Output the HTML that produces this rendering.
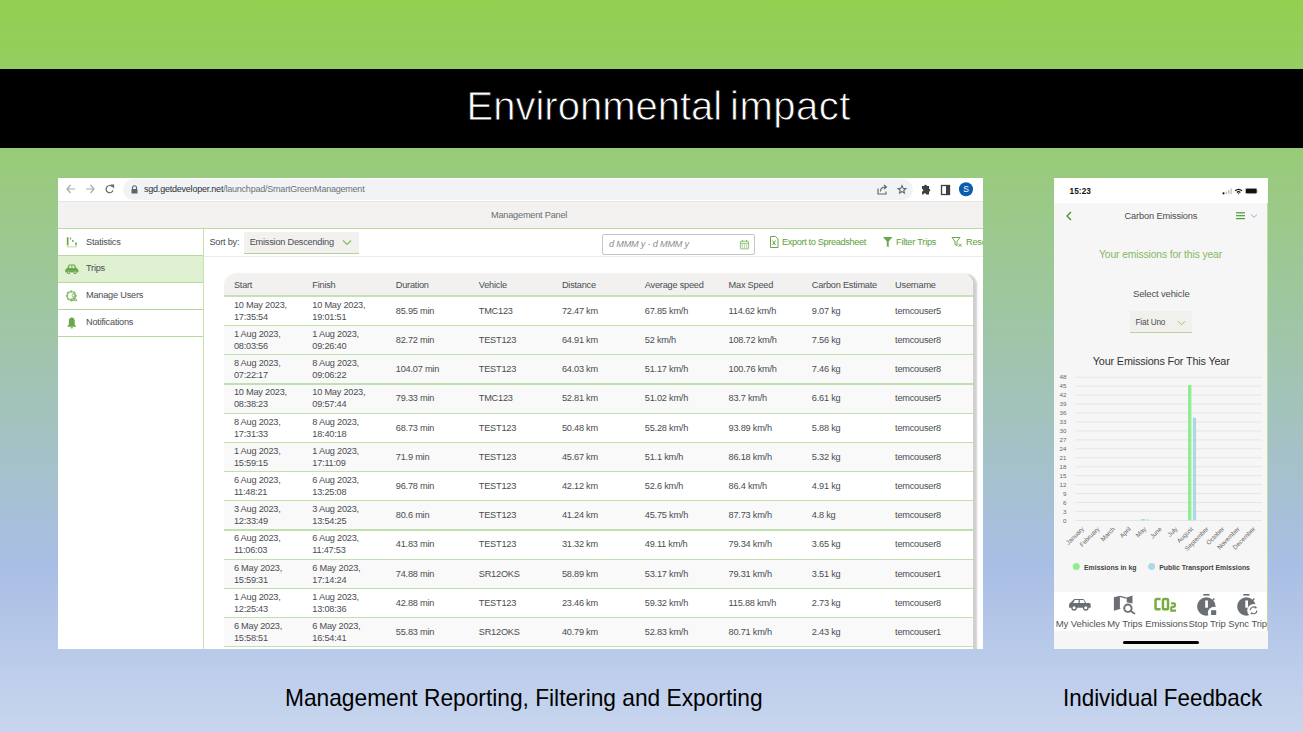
<!DOCTYPE html>
<html><head><meta charset="utf-8">
<style>
*{margin:0;padding:0;box-sizing:border-box}
html,body{width:1303px;height:732px;overflow:hidden}
body{position:relative;font-family:"Liberation Sans",sans-serif;
background:linear-gradient(180deg,#92d050 0px,#a9bee5 565px,#c8d6ee 732px);}
.abs{position:absolute;white-space:nowrap}
#band{left:0;top:69px;width:1303px;height:79px;background:#000}
#title{left:0;top:67px;width:1303px;height:79px;color:#fff;font-size:40px;text-align:center;line-height:79px;-webkit-text-stroke:0.8px #000}
.cap{color:#000;font-size:24px;white-space:nowrap;transform-origin:0 0}
#br{left:58px;top:178px;width:925px;height:471px;background:#fff;overflow:hidden}
#ph{left:1054px;top:178px;width:214px;height:471px;background:#f6f6f6;overflow:hidden}
.url{font-size:9px;color:#303134;letter-spacing:-0.22px}
.t9{font-size:9.2px;letter-spacing:-0.22px;line-height:11px}
.dk{color:#4a4d51}
.gry{color:#6a6d70}
.grn{color:#5d9e3a}
.ital{font-style:italic}
.ph{line-height:11px;letter-spacing:-0.15px}
</style></head><body>
<div id="band" class="abs"></div>
<div id="title" class="abs"><span class="abs" style="left:466.5px;top:0">Environmental</span><span class="abs" style="left:730px;top:0;letter-spacing:0.5px">impact</span></div>
<div id="br" class="abs">
<div class="abs" style="left:0;top:0;width:925px;height:24px;background:#fff;border-bottom:1px solid #e6e6e6"></div>
<svg class="abs" style="left:7px;top:5px" width="60" height="14" viewBox="0 0 60 14">
<g fill="none" stroke="#a8abae" stroke-width="1.2"><path d="M2 6H10M5.5 2L2 6l3.5 4"/><path d="M21 6H29M25.5 2L29 6l-3.5 4"/></g>
<path d="M47.4 3.7A3.6 3.6 0 1 0 48.1 7.4" fill="none" stroke="#5f6368" stroke-width="1.2"/><path d="M45.2 1.6h3.9v3.9z" fill="#5f6368"/>
</svg>
<div class="abs" style="left:65px;top:1px;width:790px;height:21px;border-radius:11px;background:#f1f3f4"></div>
<svg class="abs" style="left:73px;top:7px" width="7" height="9" viewBox="0 0 7 9"><path d="M1.5 4V2.8a2 2 0 0 1 4 0V4" fill="none" stroke="#5f6368" stroke-width="1.1"/><rect x="0.5" y="4" width="6" height="4.6" rx="0.6" fill="#5f6368"/></svg>
<div class="abs url" style="left:86px;top:6.2px">sgd.getdeveloper.net<span style="color:#6f7276">/launchpad/SmartGreenManagement</span></div>
<svg class="abs" style="left:817px;top:4px" width="100" height="16" viewBox="0 0 100 16">
<g fill="none" stroke="#5f6368" stroke-width="1.1"><path d="M3 6.5v5.5h8V9.5"/><path d="M5.5 9.5c0-3 2-4.5 5-4.5M9 3l2.5 2L9 7"/></g>
<path d="M27 3.6l1.15 2.6 2.8.25-2.15 1.8.65 2.8L27 9.6l-2.45 1.45.65-2.8-2.15-1.8 2.8-.25z" fill="none" stroke="#5f6368" stroke-width="1.1"/>
<path d="M47 4h2.2a1.3 1.3 0 0 1 2.6 0H54v3a1.3 1.3 0 0 1 0 2.6V12.5H51a1.3 1.3 0 0 0-2.6 0H47V9.6a1.3 1.3 0 0 0 0-2.6z" fill="#3c4043"/>
<rect x="66.5" y="3.5" width="8" height="9" fill="none" stroke="#3c4043" stroke-width="1.3"/><rect x="71" y="3.5" width="3.5" height="9" fill="#3c4043"/>
<circle cx="91" cy="7.3" r="7" fill="#0b5cad"/><text x="91" y="10.3" font-size="8.5" fill="#fff" text-anchor="middle" font-family="Liberation Sans">S</text>
</svg>
<div class="abs" style="left:0;top:24px;width:925px;height:27px;background:#f3f2f1;border-bottom:1.5px solid #b9dca5"></div>
<div class="abs t9 gry" style="left:433px;top:32px">Management Panel</div>
<div class="abs" style="left:144.5px;top:51px;width:1.5px;height:420px;background:#c5e3b1"></div>
<div class="abs" style="left:0;top:77.5px;width:144.5px;height:27px;background:#e0f1d1"></div>
<div class="abs" style="left:0;top:77px;width:144.5px;height:1.1px;background:#b5d99c"></div>
<div class="abs" style="left:0;top:104px;width:144.5px;height:1.1px;background:#b5d99c"></div>
<div class="abs" style="left:0;top:130.9px;width:144.5px;height:1.1px;background:#b5d99c"></div>
<div class="abs" style="left:0;top:157.5px;width:144.5px;height:1.1px;background:#b5d99c"></div>
<div class="abs t9 dk" style="left:28px;top:58.9px">Statistics</div>
<div class="abs t9 dk" style="left:28px;top:85.4px">Trips</div>
<div class="abs t9 dk" style="left:28px;top:112.4px">Manage Users</div>
<div class="abs t9 dk" style="left:28px;top:139.3px">Notifications</div>
<svg class="abs" style="left:0;top:51px" width="30" height="110" viewBox="0 51 30 110">
<g fill="#6aa84f">
<rect x="8.8" y="59.2" width="1.7" height="8.3"/><rect x="12" y="59.5" width="1.1" height="2"/><rect x="14.2" y="62" width="1.4" height="2"/><rect x="17.2" y="64.4" width="1.5" height="3"/><rect x="8.8" y="68.5" width="10.2" height="0.8" opacity="0.55"/>
</g><g fill="#6aa84f" transform="translate(7.2,86.5) scale(0.86) translate(-7.2,-86)"><path d="M7.2 93Q7.2 90.9 9.4 90.5L10.9 87.1Q11.3 86 12.4 86H17.4Q18.5 86 18.9 87.1L20.4 90.5Q22.6 90.9 22.6 93V95H20.9A2.3 2.3 0 0 0 16.4 95H13.4A2.3 2.3 0 0 0 8.9 95H7.2Z"/><circle cx="11.15" cy="95.1" r="2.1"/><circle cx="18.65" cy="95.1" r="2.1"/>
</g>
<g transform="translate(7.2,86.5) scale(0.86) translate(-7.2,-86)"><g fill="#e0f1d1"><path d="M11.4 90.2L12.5 87.3H14.5V90.2Z M15.5 87.3H17.4L18.5 90.2H15.5Z"/><circle cx="11.15" cy="95.1" r="0.9"/><circle cx="18.65" cy="95.1" r="0.9"/></g></g>
<g fill="none" stroke="#7cb65a" stroke-width="0.9">
<circle cx="13.3" cy="117.8" r="4.1"/>
<circle cx="17.60" cy="117.80" r="0.9"/><circle cx="16.34" cy="120.84" r="0.9"/><circle cx="13.30" cy="122.10" r="0.9"/><circle cx="10.26" cy="120.84" r="0.9"/><circle cx="9.00" cy="117.80" r="0.9"/><circle cx="10.26" cy="114.76" r="0.9"/><circle cx="13.30" cy="113.50" r="0.9"/><circle cx="16.34" cy="114.76" r="0.9"/>
<circle cx="15.7" cy="117.3" r="1.6"/><path d="M12.6 122.6Q13.2 119.8 15.7 119.8Q18.4 119.8 18.9 122.6Z"/>
</g>
<path fill="#6aa84f" d="M13.75 139.6Q10.8 139.8 10.8 143.3V146.4L9.5 148.2V148.8H18V148.2L16.7 146.4V143.3Q16.7 139.8 13.75 139.6ZM12.5 149.3A1.25 1.25 0 0 0 15 149.3Z"/>
</svg>
<div class="abs" style="left:146px;top:78px;width:779px;height:1px;background:#ebebeb"></div>
<div class="abs t9 dk" style="left:151.4px;top:59px">Sort by:</div>
<div class="abs" style="left:185.5px;top:54px;width:115.5px;height:21.5px;background:#f2f1f0;border-bottom:1.3px solid #b0d692"></div>
<div class="abs t9 dk" style="left:191.7px;top:58.5px">Emission Descending</div>
<svg class="abs" style="left:284px;top:61px" width="10" height="7" viewBox="0 0 10 7"><path d="M1 1.5l4 4 4-4" fill="none" stroke="#7cbf55" stroke-width="1.1"/></svg>
<div class="abs" style="left:544.3px;top:56.2px;width:153px;height:21.3px;background:#fff;border:1px solid #c6c6c6;border-radius:2px"></div>
<div class="abs t9 ital" style="left:551px;top:61px;color:#8a8d90">d MMM y - d MMM y</div>
<svg class="abs" style="left:681px;top:61px" width="11" height="11" viewBox="0 0 11 11"><g fill="none" stroke="#7ab35a" stroke-width="0.8"><rect x="1.4" y="2.2" width="8.2" height="7.6" rx="0.5"/><path d="M1.4 4.3h8.2"/><path d="M3.5 1v2M7.5 1v2"/></g><g fill="#7ab35a"><rect x="2.7" y="5.6" width="1.2" height="0.9"/><rect x="4.9" y="5.6" width="1.2" height="0.9"/><rect x="7.1" y="5.6" width="1.2" height="0.9"/><rect x="2.7" y="7.6" width="1.2" height="0.9"/><rect x="4.9" y="7.6" width="1.2" height="0.9"/><rect x="7.1" y="7.6" width="1.2" height="0.9"/></g></svg>
<svg class="abs" style="left:710px;top:57px" width="200" height="14" viewBox="0 0 200 14">
<g fill="none" stroke="#6aa84f" stroke-width="1"><path d="M2.5 1.5h5l2.5 2.5v8.5h-7.5z"/><path d="M4.5 5.5l3 4.5M7.5 5.5l-3 4.5"/></g>
<path d="M115 2h9.5l-3.8 4.6v5.6l-1.9-1V6.6z" fill="#6aa84f"/>
<g fill="none" stroke="#6aa84f" stroke-width="1"><path d="M184 2.5h8l-3 3.8v4.5l-2-1.3V6.3z"/><path d="M190.5 8.8l3 3M193.5 8.8l-3 3"/></g>
</svg>
<div class="abs t9 grn" style="left:724px;top:58.5px;letter-spacing:-0.36px">Export to Spreadsheet</div>
<div class="abs t9 grn" style="left:838px;top:58.5px">Filter Trips</div>
<div class="abs t9 grn" style="left:908px;top:58.5px">Reset</div>
<div class="abs" style="left:165.5px;top:96.30000000000001px;width:749.6px;height:400px;border-radius:10px 10px 0 0;box-shadow:3px 1px 2px 1px rgba(0,0,0,0.19)"></div>
<div class="abs" style="left:165.5px;top:96.30000000000001px;width:749.6px;height:400px;background:#fff;border-radius:10px 10px 0 0;overflow:hidden">
<div class="abs" style="left:0;top:0;width:750px;height:22.69999999999999px;background:#f2f1f0;border-bottom:1.8px solid #c8e2b6"></div>
<div class="abs t9 dk" style="left:10.400000000000006px;top:5.5px">Start</div>
<div class="abs t9 dk" style="left:88.80000000000001px;top:5.5px">Finish</div>
<div class="abs t9 dk" style="left:172.3px;top:5.5px">Duration</div>
<div class="abs t9 dk" style="left:255.3px;top:5.5px">Vehicle</div>
<div class="abs t9 dk" style="left:338.4px;top:5.5px">Distance</div>
<div class="abs t9 dk" style="left:421.29999999999995px;top:5.5px">Average speed</div>
<div class="abs t9 dk" style="left:505.1px;top:5.5px">Max Speed</div>
<div class="abs t9 dk" style="left:588.3px;top:5.5px">Carbon Estimate</div>
<div class="abs t9 dk" style="left:671.6px;top:5.5px">Username</div>
<div class="abs" style="left:0;top:21.70px;width:750px;height:29.7px;background:#fff"></div>
<div class="abs t9 dk" style="left:10.400000000000006px;top:24.60px;line-height:12px">10 May 2023,<br>17:35:54</div>
<div class="abs t9 dk" style="left:88.80000000000001px;top:24.60px;line-height:12px">10 May 2023,<br>19:01:51</div>
<div class="abs t9 dk" style="left:172.3px;top:30.60px;line-height:12px">85.95 min</div>
<div class="abs t9 dk" style="left:255.3px;top:30.60px;line-height:12px">TMC123</div>
<div class="abs t9 dk" style="left:338.4px;top:30.60px;line-height:12px">72.47 km</div>
<div class="abs t9 dk" style="left:421.29999999999995px;top:30.60px;line-height:12px">67.85 km/h</div>
<div class="abs t9 dk" style="left:505.1px;top:30.60px;line-height:12px">114.62 km/h</div>
<div class="abs t9 dk" style="left:588.3px;top:30.60px;line-height:12px">9.07 kg</div>
<div class="abs t9 dk" style="left:671.6px;top:30.60px;line-height:12px">temcouser5</div>
<div class="abs" style="left:0;top:50.90px;width:750px;height:29.7px;background:#f9f9f9"></div>
<div class="abs t9 dk" style="left:10.400000000000006px;top:53.80px;line-height:12px">1 Aug 2023,<br>08:03:56</div>
<div class="abs t9 dk" style="left:88.80000000000001px;top:53.80px;line-height:12px">1 Aug 2023,<br>09:26:40</div>
<div class="abs t9 dk" style="left:172.3px;top:59.80px;line-height:12px">82.72 min</div>
<div class="abs t9 dk" style="left:255.3px;top:59.80px;line-height:12px">TEST123</div>
<div class="abs t9 dk" style="left:338.4px;top:59.80px;line-height:12px">64.91 km</div>
<div class="abs t9 dk" style="left:421.29999999999995px;top:59.80px;line-height:12px">52 km/h</div>
<div class="abs t9 dk" style="left:505.1px;top:59.80px;line-height:12px">108.72 km/h</div>
<div class="abs t9 dk" style="left:588.3px;top:59.80px;line-height:12px">7.56 kg</div>
<div class="abs t9 dk" style="left:671.6px;top:59.80px;line-height:12px">temcouser8</div>
<div class="abs" style="left:0;top:80.10px;width:750px;height:29.7px;background:#f9f9f9"></div>
<div class="abs t9 dk" style="left:10.400000000000006px;top:83.00px;line-height:12px">8 Aug 2023,<br>07:22:17</div>
<div class="abs t9 dk" style="left:88.80000000000001px;top:83.00px;line-height:12px">8 Aug 2023,<br>09:06:22</div>
<div class="abs t9 dk" style="left:172.3px;top:89.00px;line-height:12px">104.07 min</div>
<div class="abs t9 dk" style="left:255.3px;top:89.00px;line-height:12px">TEST123</div>
<div class="abs t9 dk" style="left:338.4px;top:89.00px;line-height:12px">64.03 km</div>
<div class="abs t9 dk" style="left:421.29999999999995px;top:89.00px;line-height:12px">51.17 km/h</div>
<div class="abs t9 dk" style="left:505.1px;top:89.00px;line-height:12px">100.76 km/h</div>
<div class="abs t9 dk" style="left:588.3px;top:89.00px;line-height:12px">7.46 kg</div>
<div class="abs t9 dk" style="left:671.6px;top:89.00px;line-height:12px">temcouser8</div>
<div class="abs" style="left:0;top:109.30px;width:750px;height:29.7px;background:#f9f9f9"></div>
<div class="abs t9 dk" style="left:10.400000000000006px;top:112.20px;line-height:12px">10 May 2023,<br>08:38:23</div>
<div class="abs t9 dk" style="left:88.80000000000001px;top:112.20px;line-height:12px">10 May 2023,<br>09:57:44</div>
<div class="abs t9 dk" style="left:172.3px;top:118.20px;line-height:12px">79.33 min</div>
<div class="abs t9 dk" style="left:255.3px;top:118.20px;line-height:12px">TMC123</div>
<div class="abs t9 dk" style="left:338.4px;top:118.20px;line-height:12px">52.81 km</div>
<div class="abs t9 dk" style="left:421.29999999999995px;top:118.20px;line-height:12px">51.02 km/h</div>
<div class="abs t9 dk" style="left:505.1px;top:118.20px;line-height:12px">83.7 km/h</div>
<div class="abs t9 dk" style="left:588.3px;top:118.20px;line-height:12px">6.61 kg</div>
<div class="abs t9 dk" style="left:671.6px;top:118.20px;line-height:12px">temcouser5</div>
<div class="abs" style="left:0;top:138.50px;width:750px;height:29.7px;background:#fff"></div>
<div class="abs t9 dk" style="left:10.400000000000006px;top:141.40px;line-height:12px">8 Aug 2023,<br>17:31:33</div>
<div class="abs t9 dk" style="left:88.80000000000001px;top:141.40px;line-height:12px">8 Aug 2023,<br>18:40:18</div>
<div class="abs t9 dk" style="left:172.3px;top:147.40px;line-height:12px">68.73 min</div>
<div class="abs t9 dk" style="left:255.3px;top:147.40px;line-height:12px">TEST123</div>
<div class="abs t9 dk" style="left:338.4px;top:147.40px;line-height:12px">50.48 km</div>
<div class="abs t9 dk" style="left:421.29999999999995px;top:147.40px;line-height:12px">55.28 km/h</div>
<div class="abs t9 dk" style="left:505.1px;top:147.40px;line-height:12px">93.89 km/h</div>
<div class="abs t9 dk" style="left:588.3px;top:147.40px;line-height:12px">5.88 kg</div>
<div class="abs t9 dk" style="left:671.6px;top:147.40px;line-height:12px">temcouser8</div>
<div class="abs" style="left:0;top:167.70px;width:750px;height:29.7px;background:#f9f9f9"></div>
<div class="abs t9 dk" style="left:10.400000000000006px;top:170.60px;line-height:12px">1 Aug 2023,<br>15:59:15</div>
<div class="abs t9 dk" style="left:88.80000000000001px;top:170.60px;line-height:12px">1 Aug 2023,<br>17:11:09</div>
<div class="abs t9 dk" style="left:172.3px;top:176.60px;line-height:12px">71.9 min</div>
<div class="abs t9 dk" style="left:255.3px;top:176.60px;line-height:12px">TEST123</div>
<div class="abs t9 dk" style="left:338.4px;top:176.60px;line-height:12px">45.67 km</div>
<div class="abs t9 dk" style="left:421.29999999999995px;top:176.60px;line-height:12px">51.1 km/h</div>
<div class="abs t9 dk" style="left:505.1px;top:176.60px;line-height:12px">86.18 km/h</div>
<div class="abs t9 dk" style="left:588.3px;top:176.60px;line-height:12px">5.32 kg</div>
<div class="abs t9 dk" style="left:671.6px;top:176.60px;line-height:12px">temcouser8</div>
<div class="abs" style="left:0;top:196.90px;width:750px;height:29.7px;background:#fff"></div>
<div class="abs t9 dk" style="left:10.400000000000006px;top:199.80px;line-height:12px">6 Aug 2023,<br>11:48:21</div>
<div class="abs t9 dk" style="left:88.80000000000001px;top:199.80px;line-height:12px">6 Aug 2023,<br>13:25:08</div>
<div class="abs t9 dk" style="left:172.3px;top:205.80px;line-height:12px">96.78 min</div>
<div class="abs t9 dk" style="left:255.3px;top:205.80px;line-height:12px">TEST123</div>
<div class="abs t9 dk" style="left:338.4px;top:205.80px;line-height:12px">42.12 km</div>
<div class="abs t9 dk" style="left:421.29999999999995px;top:205.80px;line-height:12px">52.6 km/h</div>
<div class="abs t9 dk" style="left:505.1px;top:205.80px;line-height:12px">86.4 km/h</div>
<div class="abs t9 dk" style="left:588.3px;top:205.80px;line-height:12px">4.91 kg</div>
<div class="abs t9 dk" style="left:671.6px;top:205.80px;line-height:12px">temcouser8</div>
<div class="abs" style="left:0;top:226.10px;width:750px;height:29.7px;background:#f9f9f9"></div>
<div class="abs t9 dk" style="left:10.400000000000006px;top:229.00px;line-height:12px">3 Aug 2023,<br>12:33:49</div>
<div class="abs t9 dk" style="left:88.80000000000001px;top:229.00px;line-height:12px">3 Aug 2023,<br>13:54:25</div>
<div class="abs t9 dk" style="left:172.3px;top:235.00px;line-height:12px">80.6 min</div>
<div class="abs t9 dk" style="left:255.3px;top:235.00px;line-height:12px">TEST123</div>
<div class="abs t9 dk" style="left:338.4px;top:235.00px;line-height:12px">41.24 km</div>
<div class="abs t9 dk" style="left:421.29999999999995px;top:235.00px;line-height:12px">45.75 km/h</div>
<div class="abs t9 dk" style="left:505.1px;top:235.00px;line-height:12px">87.73 km/h</div>
<div class="abs t9 dk" style="left:588.3px;top:235.00px;line-height:12px">4.8 kg</div>
<div class="abs t9 dk" style="left:671.6px;top:235.00px;line-height:12px">temcouser8</div>
<div class="abs" style="left:0;top:255.30px;width:750px;height:29.7px;background:#fff"></div>
<div class="abs t9 dk" style="left:10.400000000000006px;top:258.20px;line-height:12px">6 Aug 2023,<br>11:06:03</div>
<div class="abs t9 dk" style="left:88.80000000000001px;top:258.20px;line-height:12px">6 Aug 2023,<br>11:47:53</div>
<div class="abs t9 dk" style="left:172.3px;top:264.20px;line-height:12px">41.83 min</div>
<div class="abs t9 dk" style="left:255.3px;top:264.20px;line-height:12px">TEST123</div>
<div class="abs t9 dk" style="left:338.4px;top:264.20px;line-height:12px">31.32 km</div>
<div class="abs t9 dk" style="left:421.29999999999995px;top:264.20px;line-height:12px">49.11 km/h</div>
<div class="abs t9 dk" style="left:505.1px;top:264.20px;line-height:12px">79.34 km/h</div>
<div class="abs t9 dk" style="left:588.3px;top:264.20px;line-height:12px">3.65 kg</div>
<div class="abs t9 dk" style="left:671.6px;top:264.20px;line-height:12px">temcouser8</div>
<div class="abs" style="left:0;top:284.50px;width:750px;height:29.7px;background:#f9f9f9"></div>
<div class="abs t9 dk" style="left:10.400000000000006px;top:287.40px;line-height:12px">6 May 2023,<br>15:59:31</div>
<div class="abs t9 dk" style="left:88.80000000000001px;top:287.40px;line-height:12px">6 May 2023,<br>17:14:24</div>
<div class="abs t9 dk" style="left:172.3px;top:293.40px;line-height:12px">74.88 min</div>
<div class="abs t9 dk" style="left:255.3px;top:293.40px;line-height:12px">SR12OKS</div>
<div class="abs t9 dk" style="left:338.4px;top:293.40px;line-height:12px">58.89 km</div>
<div class="abs t9 dk" style="left:421.29999999999995px;top:293.40px;line-height:12px">53.17 km/h</div>
<div class="abs t9 dk" style="left:505.1px;top:293.40px;line-height:12px">79.31 km/h</div>
<div class="abs t9 dk" style="left:588.3px;top:293.40px;line-height:12px">3.51 kg</div>
<div class="abs t9 dk" style="left:671.6px;top:293.40px;line-height:12px">temcouser1</div>
<div class="abs" style="left:0;top:313.70px;width:750px;height:29.7px;background:#fff"></div>
<div class="abs t9 dk" style="left:10.400000000000006px;top:316.60px;line-height:12px">1 Aug 2023,<br>12:25:43</div>
<div class="abs t9 dk" style="left:88.80000000000001px;top:316.60px;line-height:12px">1 Aug 2023,<br>13:08:36</div>
<div class="abs t9 dk" style="left:172.3px;top:322.60px;line-height:12px">42.88 min</div>
<div class="abs t9 dk" style="left:255.3px;top:322.60px;line-height:12px">TEST123</div>
<div class="abs t9 dk" style="left:338.4px;top:322.60px;line-height:12px">23.46 km</div>
<div class="abs t9 dk" style="left:421.29999999999995px;top:322.60px;line-height:12px">59.32 km/h</div>
<div class="abs t9 dk" style="left:505.1px;top:322.60px;line-height:12px">115.88 km/h</div>
<div class="abs t9 dk" style="left:588.3px;top:322.60px;line-height:12px">2.73 kg</div>
<div class="abs t9 dk" style="left:671.6px;top:322.60px;line-height:12px">temcouser8</div>
<div class="abs" style="left:0;top:342.90px;width:750px;height:29.7px;background:#f9f9f9"></div>
<div class="abs t9 dk" style="left:10.400000000000006px;top:345.80px;line-height:12px">6 May 2023,<br>15:58:51</div>
<div class="abs t9 dk" style="left:88.80000000000001px;top:345.80px;line-height:12px">6 May 2023,<br>16:54:41</div>
<div class="abs t9 dk" style="left:172.3px;top:351.80px;line-height:12px">55.83 min</div>
<div class="abs t9 dk" style="left:255.3px;top:351.80px;line-height:12px">SR12OKS</div>
<div class="abs t9 dk" style="left:338.4px;top:351.80px;line-height:12px">40.79 km</div>
<div class="abs t9 dk" style="left:421.29999999999995px;top:351.80px;line-height:12px">52.83 km/h</div>
<div class="abs t9 dk" style="left:505.1px;top:351.80px;line-height:12px">80.71 km/h</div>
<div class="abs t9 dk" style="left:588.3px;top:351.80px;line-height:12px">2.43 kg</div>
<div class="abs t9 dk" style="left:671.6px;top:351.80px;line-height:12px">temcouser1</div>
<div class="abs" style="left:0;top:20.90px;width:750px;height:1.9px;background:#c8e2b6"></div>
<div class="abs" style="left:0;top:50.70px;width:750px;height:1.2px;background:#c2e0ad"></div>
<div class="abs" style="left:0;top:79.90px;width:750px;height:1.2px;background:#c2e0ad"></div>
<div class="abs" style="left:0;top:109.10px;width:750px;height:1.2px;background:#c2e0ad"></div>
<div class="abs" style="left:0;top:138.30px;width:750px;height:1.2px;background:#c2e0ad"></div>
<div class="abs" style="left:0;top:167.50px;width:750px;height:1.2px;background:#c2e0ad"></div>
<div class="abs" style="left:0;top:196.70px;width:750px;height:1.2px;background:#c2e0ad"></div>
<div class="abs" style="left:0;top:225.90px;width:750px;height:1.2px;background:#c2e0ad"></div>
<div class="abs" style="left:0;top:255.10px;width:750px;height:1.2px;background:#c2e0ad"></div>
<div class="abs" style="left:0;top:284.30px;width:750px;height:1.2px;background:#c2e0ad"></div>
<div class="abs" style="left:0;top:313.50px;width:750px;height:1.2px;background:#c2e0ad"></div>
<div class="abs" style="left:0;top:342.70px;width:750px;height:1.2px;background:#c2e0ad"></div>
<div class="abs" style="left:0;top:371.90px;width:750px;height:1.2px;background:#c2e0ad"></div>
</div>
</div>
<div id="ph" class="abs">
<div class="abs" style="left:0;top:0;width:214px;height:25px;background:#fff"></div>
<div class="abs" style="left:15.5px;top:9px;font-size:8.2px;font-weight:bold;color:#111;letter-spacing:0.1px">15:23</div>
<svg class="abs" style="left:168px;top:9.8px" width="40" height="8" viewBox="0 0 40 8">
<circle cx="1.5" cy="5.3" r="1.1" fill="#111"/><rect x="3.6" y="3.6" width="1.5" height="2.6" fill="#c8c8c8"/><rect x="6" y="2" width="1.5" height="4.2" fill="#c8c8c8"/><rect x="8.4" y="0.4" width="1.5" height="5.8" fill="#c8c8c8"/>
<path d="M12.8 2.2a6 6 0 0 1 7.6 0l-.9 1a4.6 4.6 0 0 0-5.8 0z M14.4 3.9a3.4 3.4 0 0 1 4.4 0l-.9 1a2 2 0 0 0-2.6 0z M15.8 5.5a1.3 1.3 0 0 1 1.6 0l-.8.9z" fill="#111"/>
<rect x="23.4" y="0.3" width="11.6" height="5.4" rx="1.4" fill="#111" stroke="#d8d8d8" stroke-width="0.7"/><rect x="35" y="2.3" width="0.9" height="1.8" fill="#c8c8c8"/>
</svg>
<div class="abs" style="left:213px;top:25px;width:1px;height:428px;background:#c0dc9f"></div>
<svg class="abs" style="left:11px;top:33px" width="8" height="10" viewBox="0 0 8 10"><path d="M6 1L2 5l4 4" fill="none" stroke="#3f8f2c" stroke-width="1.3"/></svg>
<div class="abs ph dk" style="left:70.6px;top:32.8px;font-size:9.25px">Carbon Emissions</div>
<svg class="abs" style="left:181px;top:33px" width="24" height="9" viewBox="0 0 24 9"><g fill="#4c9a37"><rect x="1" y="1.2" width="9" height="1.2"/><rect x="1" y="4.1" width="9" height="1.2"/><rect x="1" y="7" width="9" height="1.2"/></g><path d="M16 3.5l3 2.8 3-2.8" fill="none" stroke="#7d9ed6" stroke-width="0.8"/></svg>
<div class="abs ph" style="left:45px;top:71.3px;font-size:10.4px;color:#86b85f">Your emissions for this year</div>
<div class="abs ph dk" style="left:79px;top:109.9px;font-size:9.5px">Select vehicle</div>
<div class="abs" style="left:75.6px;top:133px;width:62.6px;height:22px;background:#f1f0ed;border-bottom:1.5px solid #b9d79f"></div>
<div class="abs ph dk" style="left:81.5px;top:138.5px;font-size:8.2px">Fiat Uno</div>
<svg class="abs" style="left:122.5px;top:141.5px" width="9" height="6" viewBox="0 0 9 6"><path d="M1 1.2l3.5 3.5 3.5-3.5" fill="none" stroke="#8cc46b" stroke-width="0.9"/></svg>
<div class="abs ph" style="left:38.8px;top:177.5px;font-size:10.8px;color:#333">Your Emissions For This Year</div>
<svg class="abs" style="left:0;top:190px" width="214" height="215" viewBox="0 190 214 215">
<rect x="21.2" y="198.70" width="186.8" height="1" fill="#e6e6e6"/>
<text x="12.4" y="201.30" font-size="6.2" fill="#666" text-anchor="end" font-family="Liberation Sans">48</text>
<rect x="21.2" y="207.65" width="186.8" height="1" fill="#e6e6e6"/>
<text x="12.4" y="210.25" font-size="6.2" fill="#666" text-anchor="end" font-family="Liberation Sans">45</text>
<rect x="21.2" y="216.60" width="186.8" height="1" fill="#e6e6e6"/>
<text x="12.4" y="219.20" font-size="6.2" fill="#666" text-anchor="end" font-family="Liberation Sans">42</text>
<rect x="21.2" y="225.55" width="186.8" height="1" fill="#e6e6e6"/>
<text x="12.4" y="228.15" font-size="6.2" fill="#666" text-anchor="end" font-family="Liberation Sans">39</text>
<rect x="21.2" y="234.50" width="186.8" height="1" fill="#e6e6e6"/>
<text x="12.4" y="237.10" font-size="6.2" fill="#666" text-anchor="end" font-family="Liberation Sans">36</text>
<rect x="21.2" y="243.45" width="186.8" height="1" fill="#e6e6e6"/>
<text x="12.4" y="246.05" font-size="6.2" fill="#666" text-anchor="end" font-family="Liberation Sans">33</text>
<rect x="21.2" y="252.40" width="186.8" height="1" fill="#e6e6e6"/>
<text x="12.4" y="255.00" font-size="6.2" fill="#666" text-anchor="end" font-family="Liberation Sans">30</text>
<rect x="21.2" y="261.35" width="186.8" height="1" fill="#e6e6e6"/>
<text x="12.4" y="263.95" font-size="6.2" fill="#666" text-anchor="end" font-family="Liberation Sans">27</text>
<rect x="21.2" y="270.30" width="186.8" height="1" fill="#e6e6e6"/>
<text x="12.4" y="272.90" font-size="6.2" fill="#666" text-anchor="end" font-family="Liberation Sans">24</text>
<rect x="21.2" y="279.25" width="186.8" height="1" fill="#e6e6e6"/>
<text x="12.4" y="281.85" font-size="6.2" fill="#666" text-anchor="end" font-family="Liberation Sans">21</text>
<rect x="21.2" y="288.20" width="186.8" height="1" fill="#e6e6e6"/>
<text x="12.4" y="290.80" font-size="6.2" fill="#666" text-anchor="end" font-family="Liberation Sans">18</text>
<rect x="21.2" y="297.15" width="186.8" height="1" fill="#e6e6e6"/>
<text x="12.4" y="299.75" font-size="6.2" fill="#666" text-anchor="end" font-family="Liberation Sans">15</text>
<rect x="21.2" y="306.10" width="186.8" height="1" fill="#e6e6e6"/>
<text x="12.4" y="308.70" font-size="6.2" fill="#666" text-anchor="end" font-family="Liberation Sans">12</text>
<rect x="21.2" y="315.05" width="186.8" height="1" fill="#e6e6e6"/>
<text x="12.4" y="317.65" font-size="6.2" fill="#666" text-anchor="end" font-family="Liberation Sans">9</text>
<rect x="21.2" y="324.00" width="186.8" height="1" fill="#e6e6e6"/>
<text x="12.4" y="326.60" font-size="6.2" fill="#666" text-anchor="end" font-family="Liberation Sans">6</text>
<rect x="21.2" y="332.95" width="186.8" height="1" fill="#e6e6e6"/>
<text x="12.4" y="335.55" font-size="6.2" fill="#666" text-anchor="end" font-family="Liberation Sans">3</text>
<rect x="21.2" y="341.90" width="186.8" height="1" fill="#dfe5ef"/>
<text x="12.4" y="344.50" font-size="6.2" fill="#666" text-anchor="end" font-family="Liberation Sans">0</text>
<rect x="134.00" y="206.96" width="3.4" height="135.44" fill="#90ee90"/>
<rect x="138.90" y="239.77" width="3.2" height="102.63" fill="#add8e6"/>
<rect x="87.20" y="341.06" width="3.6" height="1.34" fill="#90ee90"/>
<rect x="92.00" y="341.50" width="3.1" height="0.89" fill="#add8e6"/>
<text transform="translate(30.40,351.4) rotate(-45)" font-size="6.3" fill="#666" text-anchor="end" font-family="Liberation Sans">January</text>
<text transform="translate(45.98,351.4) rotate(-45)" font-size="6.3" fill="#666" text-anchor="end" font-family="Liberation Sans">February</text>
<text transform="translate(61.56,351.4) rotate(-45)" font-size="6.3" fill="#666" text-anchor="end" font-family="Liberation Sans">March</text>
<text transform="translate(77.14,351.4) rotate(-45)" font-size="6.3" fill="#666" text-anchor="end" font-family="Liberation Sans">April</text>
<text transform="translate(92.72,351.4) rotate(-45)" font-size="6.3" fill="#666" text-anchor="end" font-family="Liberation Sans">May</text>
<text transform="translate(108.30,351.4) rotate(-45)" font-size="6.3" fill="#666" text-anchor="end" font-family="Liberation Sans">June</text>
<text transform="translate(123.88,351.4) rotate(-45)" font-size="6.3" fill="#666" text-anchor="end" font-family="Liberation Sans">July</text>
<text transform="translate(139.46,351.4) rotate(-45)" font-size="6.3" fill="#666" text-anchor="end" font-family="Liberation Sans">August</text>
<text transform="translate(155.04,351.4) rotate(-45)" font-size="6.3" fill="#666" text-anchor="end" font-family="Liberation Sans">September</text>
<text transform="translate(170.62,351.4) rotate(-45)" font-size="6.3" fill="#666" text-anchor="end" font-family="Liberation Sans">October</text>
<text transform="translate(186.20,351.4) rotate(-45)" font-size="6.3" fill="#666" text-anchor="end" font-family="Liberation Sans">November</text>
<text transform="translate(201.78,351.4) rotate(-45)" font-size="6.3" fill="#666" text-anchor="end" font-family="Liberation Sans">December</text>
<circle cx="22.3" cy="388.6" r="3.5" fill="#90ee90"/>
<circle cx="97.6" cy="388.6" r="3.5" fill="#add8e6"/>
<text x="30" y="391.5" font-size="6.9" font-weight="bold" fill="#444" font-family="Liberation Sans">Emissions in kg</text>
<text x="105.2" y="391.5" font-size="6.9" font-weight="bold" fill="#444" font-family="Liberation Sans">Public Transport Emissions</text>
</svg>
<div class="abs" style="left:0;top:413.7px;width:213px;height:39px;background:#fff"></div>
<svg class="abs" style="left:0;top:414px" width="214" height="24" viewBox="0 414 214 24">
<path fill="#6b6e72" d="M15.1 429.7V426.6Q15.1 425.2 16.4 424.7L20.2 421.1H29.5L32.2 425H35.4Q36.7 425.2 36.7 426.8V429.7Z"/>
<g fill="#fff"><path d="M19 425L20.9 422.1H24.6V425Z M25.8 422.1H29.4L31 425H25.8Z"/></g>
<g fill="#6b6e72"><circle cx="20.1" cy="429.8" r="2.85"/><circle cx="31.8" cy="429.8" r="2.85"/></g>
<g fill="#fff"><circle cx="20.1" cy="429.8" r="1.5"/><circle cx="31.8" cy="429.8" r="1.5"/></g>
<path fill="#6b6e72" d="M59.9 419.3L65.9 417.7V430L66.8 430.7L59.9 432.8Z M72.7 419.5L78.5 417.5V425.4L72.7 424.2Z"/>
<path d="M65.9 418.3L72.7 420.2" stroke="#6b6e72" stroke-width="1.3" fill="none"/>
<g fill="none" stroke="#6b6e72"><circle cx="73.9" cy="430.2" r="3.7" stroke-width="1.9"/><path d="M76.6 433L80.4 435.4" stroke-width="1.8" stroke-linecap="round"/></g>
<g fill="none" stroke="#78ad45" stroke-width="2.5">
<path d="M106.6 421.05H103Q101.55 421.05 101.55 422.5V430Q101.55 431.35 103 431.35H106.6"/>
<rect x="108.95" y="421.05" width="5.1" height="10.3" rx="1.4"/>
</g>
<path d="M117 425.3H119.8Q121 425.3 121 426.5V427.6Q121 428.8 119.8 428.8H118.3Q117.3 428.8 117.3 429.8V432.6H122.1" fill="none" stroke="#78ad45" stroke-width="2.2"/>
<g fill="#6b6e72">
<rect x="149.3" y="416" width="6.2" height="1.6"/>
<circle cx="152.35" cy="428.5" r="9.25"/>
<path d="M158.3 421.8l1.6-1.9 1 1-1.7 1.8z"/>
<rect x="189.3" y="416" width="6.2" height="1.6"/>
<circle cx="192.4" cy="428.5" r="9.25"/>
<path d="M198.3 421.8l1.6-1.9 1 1-1.7 1.8z"/>
</g>
<g fill="#fff">
<circle cx="160.2" cy="435" r="6.3"/>
<rect x="151.2" y="422.5" width="2.7" height="7.2"/>
<circle cx="199.6" cy="432.5" r="6.4"/>
<rect x="191.3" y="422.5" width="2.7" height="7.2"/>
</g>
<rect x="157.1" y="432.2" width="5.1" height="4.8" fill="#6b6e72"/>
<g fill="none" stroke="#6b6e72" stroke-width="1.1"><path d="M196.3 432.2a3.3 3.3 0 0 1 5.6-2.4"/><path d="M202.9 432.4a3.3 3.3 0 0 1-5.6 2.4"/></g>
<path d="M201.3 428l1.8 1.9-2.4.5z M197.9 436.8l-1.8-1.9 2.4-.5z" fill="#6b6e72"/>
</svg>
<div class="abs ph" style="left:1.8px;top:440.2px;font-size:9.5px;letter-spacing:-0.1px;color:#505357">My Vehicles</div>
<div class="abs ph" style="left:53.3px;top:440.2px;font-size:9.5px;letter-spacing:-0.1px;color:#505357">My Trips</div>
<div class="abs ph" style="left:91.2px;top:440.2px;font-size:9.5px;letter-spacing:-0.1px;color:#505357">Emissions</div>
<div class="abs ph" style="left:134.5px;top:440.2px;font-size:9.5px;letter-spacing:-0.1px;color:#505357">Stop Trip</div>
<div class="abs ph" style="left:174.3px;top:440.2px;font-size:9.5px;letter-spacing:-0.1px;color:#505357">Sync Trip</div>
<div class="abs" style="left:68.8px;top:463px;width:76.2px;height:3.3px;border-radius:2px;background:#000"></div>
</div>
<div class="abs cap" style="left:284.6px;top:683.5px;transform:scaleX(0.947)">Management Reporting, Filtering and Exporting</div>
<div class="abs cap" style="left:1063px;top:683.5px;transform:scaleX(0.933)">Individual Feedback</div>
</body></html>
